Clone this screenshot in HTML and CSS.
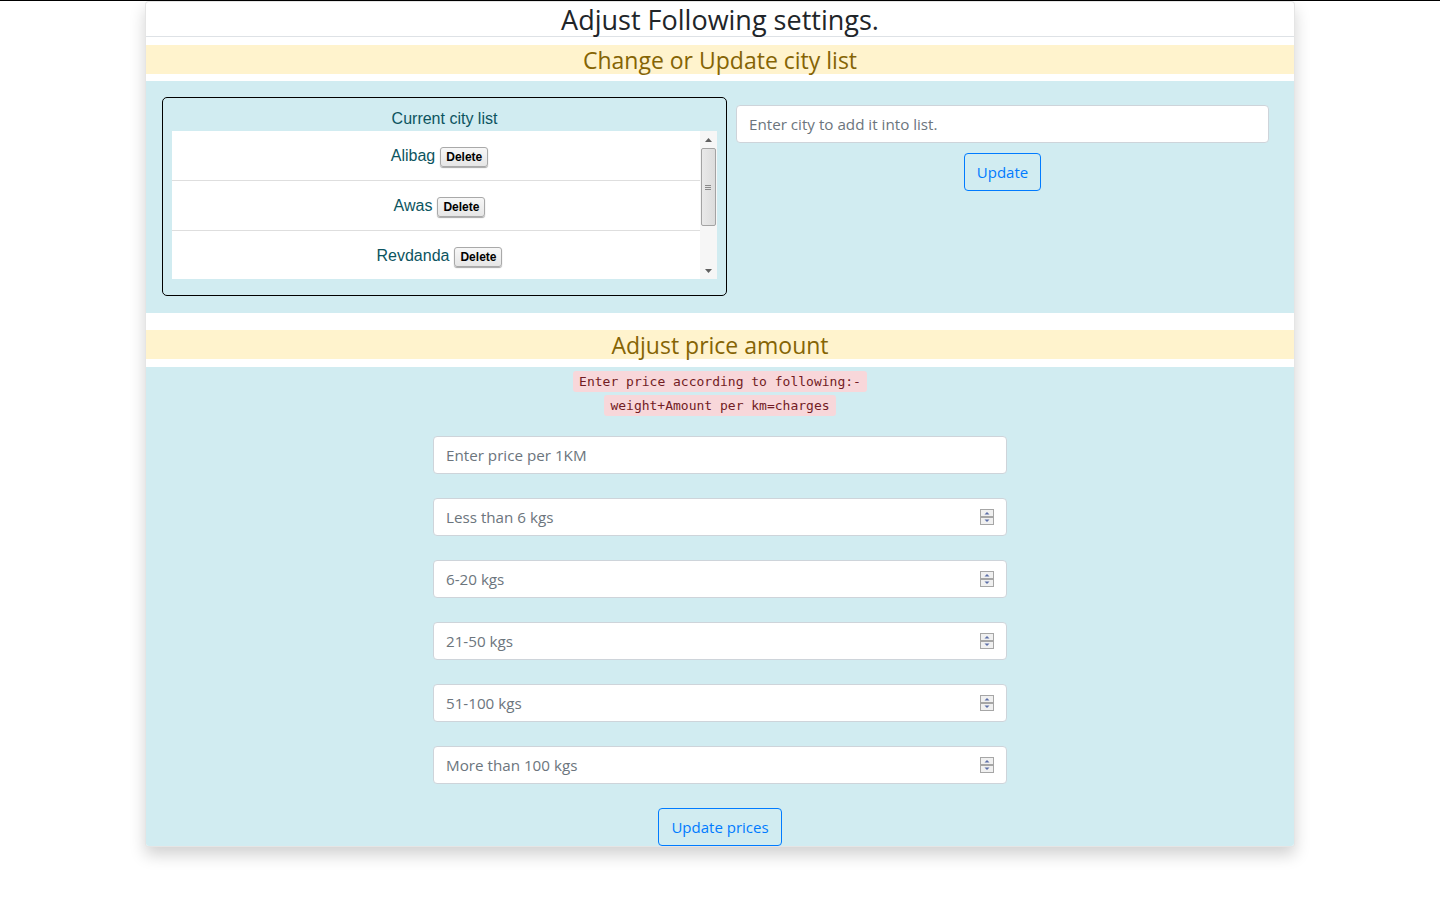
FILE: index.html
```html
<!DOCTYPE html>
<html>
<head>
<meta charset="utf-8">
<title>Settings</title>
<link rel="stylesheet" href="styles.css">
</head>
<body>
<div class="topline"></div>
<div class="card">
  <div class="card-header">Adjust Following settings.</div>
  <h4 class="band band-city">Change or Update city list</h4>
  <section class="info city-section">
    <div class="city-box">
      <div class="city-title">Current city list</div>
      <div class="city-scroll">
        <ul class="city-list">
          <li><span class="city-name">Alibag</span><button class="del">Delete</button></li>
          <li><span class="city-name">Awas</span><button class="del">Delete</button></li>
          <li><span class="city-name">Revdanda</span><button class="del">Delete</button></li>
        </ul>
        <div class="scrollbar">
          <div class="sb-arrow"><svg width="7" height="4" viewBox="0 0 7 4"><path d="M0 4h7L3.5 0z" fill="#606060"/></svg></div>
          <div class="sb-track">
            <div class="sb-thumb"><svg width="6" height="5" viewBox="0 0 6 5"><path d="M0 0.5h6M0 2.5h6M0 4.5h6" stroke="#8a8a8a" stroke-width="1"/></svg></div>
          </div>
          <div class="sb-arrow"><svg width="7" height="4" viewBox="0 0 7 4"><path d="M0 0h7L3.5 4z" fill="#606060"/></svg></div>
        </div>
      </div>
    </div>
    <div class="city-add">
      <input class="form-control" type="text" placeholder="Enter city to add it into list.">
      <button class="btn-outline btn-update">Update</button>
    </div>
  </section>
  <h4 class="band band-price">Adjust price amount</h4>
  <section class="info price-section">
    <p class="formula"><code>Enter price according to following:-</code><br><code>weight+Amount per km=charges</code></p>
    <input class="form-control price-field" type="text" placeholder="Enter price per 1KM">
    <div class="num-field price-field"><input type="number" placeholder="Less than 6 kgs"><svg class="spin" width="14" height="16" viewBox="0 0 14 16"><rect x="0.5" y="0.5" width="13" height="7" fill="#f0f0f0" stroke="#a6a6a6"/><rect x="0.5" y="8.5" width="13" height="7" fill="#f0f0f0" stroke="#a6a6a6"/><path d="M4.5 5.5h5L7 3z" fill="#5c6fa8"/><path d="M4.5 10.5h5L7 13z" fill="#5c6fa8"/></svg></div>
    <div class="num-field price-field"><input type="number" placeholder="6-20 kgs"><svg class="spin" width="14" height="16" viewBox="0 0 14 16"><rect x="0.5" y="0.5" width="13" height="7" fill="#f0f0f0" stroke="#a6a6a6"/><rect x="0.5" y="8.5" width="13" height="7" fill="#f0f0f0" stroke="#a6a6a6"/><path d="M4.5 5.5h5L7 3z" fill="#5c6fa8"/><path d="M4.5 10.5h5L7 13z" fill="#5c6fa8"/></svg></div>
    <div class="num-field price-field"><input type="number" placeholder="21-50 kgs"><svg class="spin" width="14" height="16" viewBox="0 0 14 16"><rect x="0.5" y="0.5" width="13" height="7" fill="#f0f0f0" stroke="#a6a6a6"/><rect x="0.5" y="8.5" width="13" height="7" fill="#f0f0f0" stroke="#a6a6a6"/><path d="M4.5 5.5h5L7 3z" fill="#5c6fa8"/><path d="M4.5 10.5h5L7 13z" fill="#5c6fa8"/></svg></div>
    <div class="num-field price-field"><input type="number" placeholder="51-100 kgs"><svg class="spin" width="14" height="16" viewBox="0 0 14 16"><rect x="0.5" y="0.5" width="13" height="7" fill="#f0f0f0" stroke="#a6a6a6"/><rect x="0.5" y="8.5" width="13" height="7" fill="#f0f0f0" stroke="#a6a6a6"/><path d="M4.5 5.5h5L7 3z" fill="#5c6fa8"/><path d="M4.5 10.5h5L7 13z" fill="#5c6fa8"/></svg></div>
    <div class="num-field price-field"><input type="number" placeholder="More than 100 kgs"><svg class="spin" width="14" height="16" viewBox="0 0 14 16"><rect x="0.5" y="0.5" width="13" height="7" fill="#f0f0f0" stroke="#a6a6a6"/><rect x="0.5" y="8.5" width="13" height="7" fill="#f0f0f0" stroke="#a6a6a6"/><path d="M4.5 5.5h5L7 3z" fill="#5c6fa8"/><path d="M4.5 10.5h5L7 13z" fill="#5c6fa8"/></svg></div>
    <button class="btn-outline btn-prices">Update prices</button>
  </section>
</div>
</body>
</html>
```

FILE: styles.css
```css
* { box-sizing: border-box; }
html, body { margin: 0; padding: 0; background: #fff; }
body { font-family: "Open Sans", "Noto Sans", sans-serif; color: #212529; padding-bottom: 40px; }

.topline { height: 1px; background: #000; }

.card {
  width: 1150px;
  margin: 0 auto;
  border: 1px solid rgba(0,0,0,.1);
  border-radius: 4px;
  background: #fff;
  box-shadow: 0 8px 16px rgba(0,0,0,.18);
  overflow: hidden;
}

.card-header {
  font-size: 27px;
  line-height: 33px;
  padding-top: 1px;
  text-align: center;
  border-bottom: 1px solid #dee2e6;
}

.band {
  background: #fff3cd;
  color: #856404;
  font-size: 23px;
  font-weight: 400;
  line-height: 27px;
  height: 29px;
  padding-top: 2px;
  text-align: center;
}
.band-city { margin: 8px 0 7px; }
.band-price { margin: 17px 0 8px; }

.info { background: #d1ecf1; }

.city-section {
  display: flex;
  align-items: flex-start;
  gap: 9px;
  padding: 16px 25px 17px 16px;
}

.city-box {
  width: 566px;
  border: 1px solid #000;
  border-radius: 5px;
  padding: 9px 9px 16px;
}
.city-title {
  font: 16px/24px "Liberation Sans", Arial, sans-serif;
  color: #0c5460;
  text-align: center;
}
.city-scroll {
  display: flex;
  height: 148px;
  background: #fff;
}
.city-list {
  flex: 1;
  margin: 0;
  padding: 0;
  list-style: none;
  overflow: hidden;
}
.city-list li {
  height: 50px;
  border-bottom: 1px solid #dedede;
  display: flex;
  align-items: center;
  justify-content: center;
  gap: 5px;
  padding-left: 7px;
  font: 16px/24px "Liberation Sans", Arial, sans-serif;
  color: #0c5460;
}
.del {
  font: bold 12px/14px "Liberation Sans", Arial, sans-serif;
  color: #000;
  padding: 2px 5px;
  margin-top: 2px;
  border: 1px solid #a9a9a9;
  border-radius: 3px;
  background: linear-gradient(#f7f7f7, #e6e6e6);
  box-shadow: 0 1px 1px rgba(0,0,0,.35);
}

.scrollbar {
  width: 17px;
  display: flex;
  flex-direction: column;
  background: #f6f6f6;
}
.sb-arrow {
  height: 17px;
  display: flex;
  align-items: center;
  justify-content: center;
}
.sb-track {
  flex: 1;
  padding: 0 1px;
}
.sb-thumb {
  height: 78px;
  border: 1px solid #a3a3a3;
  border-radius: 2px;
  background: linear-gradient(90deg, #e9e9e9, #dcdcdc);
  display: flex;
  align-items: center;
  justify-content: center;
}

.city-add {
  width: 534px;
  margin-top: 8px;
  display: flex;
  flex-direction: column;
  align-items: center;
}

.form-control, .num-field {
  width: 100%;
  height: 38px;
  padding: 6px 12px;
  font-family: "Open Sans", "Noto Sans", sans-serif;
  font-size: 15.2px;
  color: #495057;
  background: #fff;
  border: 1px solid #ced4da;
  border-radius: 4px;
}
.form-control::placeholder, .num-field input::placeholder { color: #6c757d; opacity: 1; }

.num-field {
  display: flex;
  align-items: center;
  gap: 8px;
}
.num-field input {
  flex: 1;
  min-width: 0;
  border: 0;
  outline: 0;
  padding: 0;
  background: transparent;
  font: inherit;
  color: inherit;
  -moz-appearance: textfield;
}
.num-field input::-webkit-inner-spin-button,
.num-field input::-webkit-outer-spin-button { -webkit-appearance: none; margin: 0; }
.spin { flex: none; }

.btn-outline {
  font-family: "Open Sans", "Noto Sans", sans-serif;
  font-size: 15px;
  line-height: 24px;
  color: #007bff;
  background: transparent;
  border: 1px solid #007bff;
  border-radius: 4px;
  padding: 6px 12px;
}
.btn-update { margin-top: 10px; }

.price-section {
  display: flex;
  flex-direction: column;
  align-items: center;
  padding-top: 3px;
}
.formula {
  margin: 0 0 18px;
  text-align: center;
  line-height: 24px;
  font-family: "DejaVu Sans Mono", "Liberation Mono", monospace;
  font-size: 13px;
}
.formula code {
  font-family: inherit;
  background: #f8d7da;
  color: #721c24;
  padding: 3px 6px;
  border-radius: 3px;
}
.price-field {
  width: 574px;
  margin-bottom: 24px;
}
```
